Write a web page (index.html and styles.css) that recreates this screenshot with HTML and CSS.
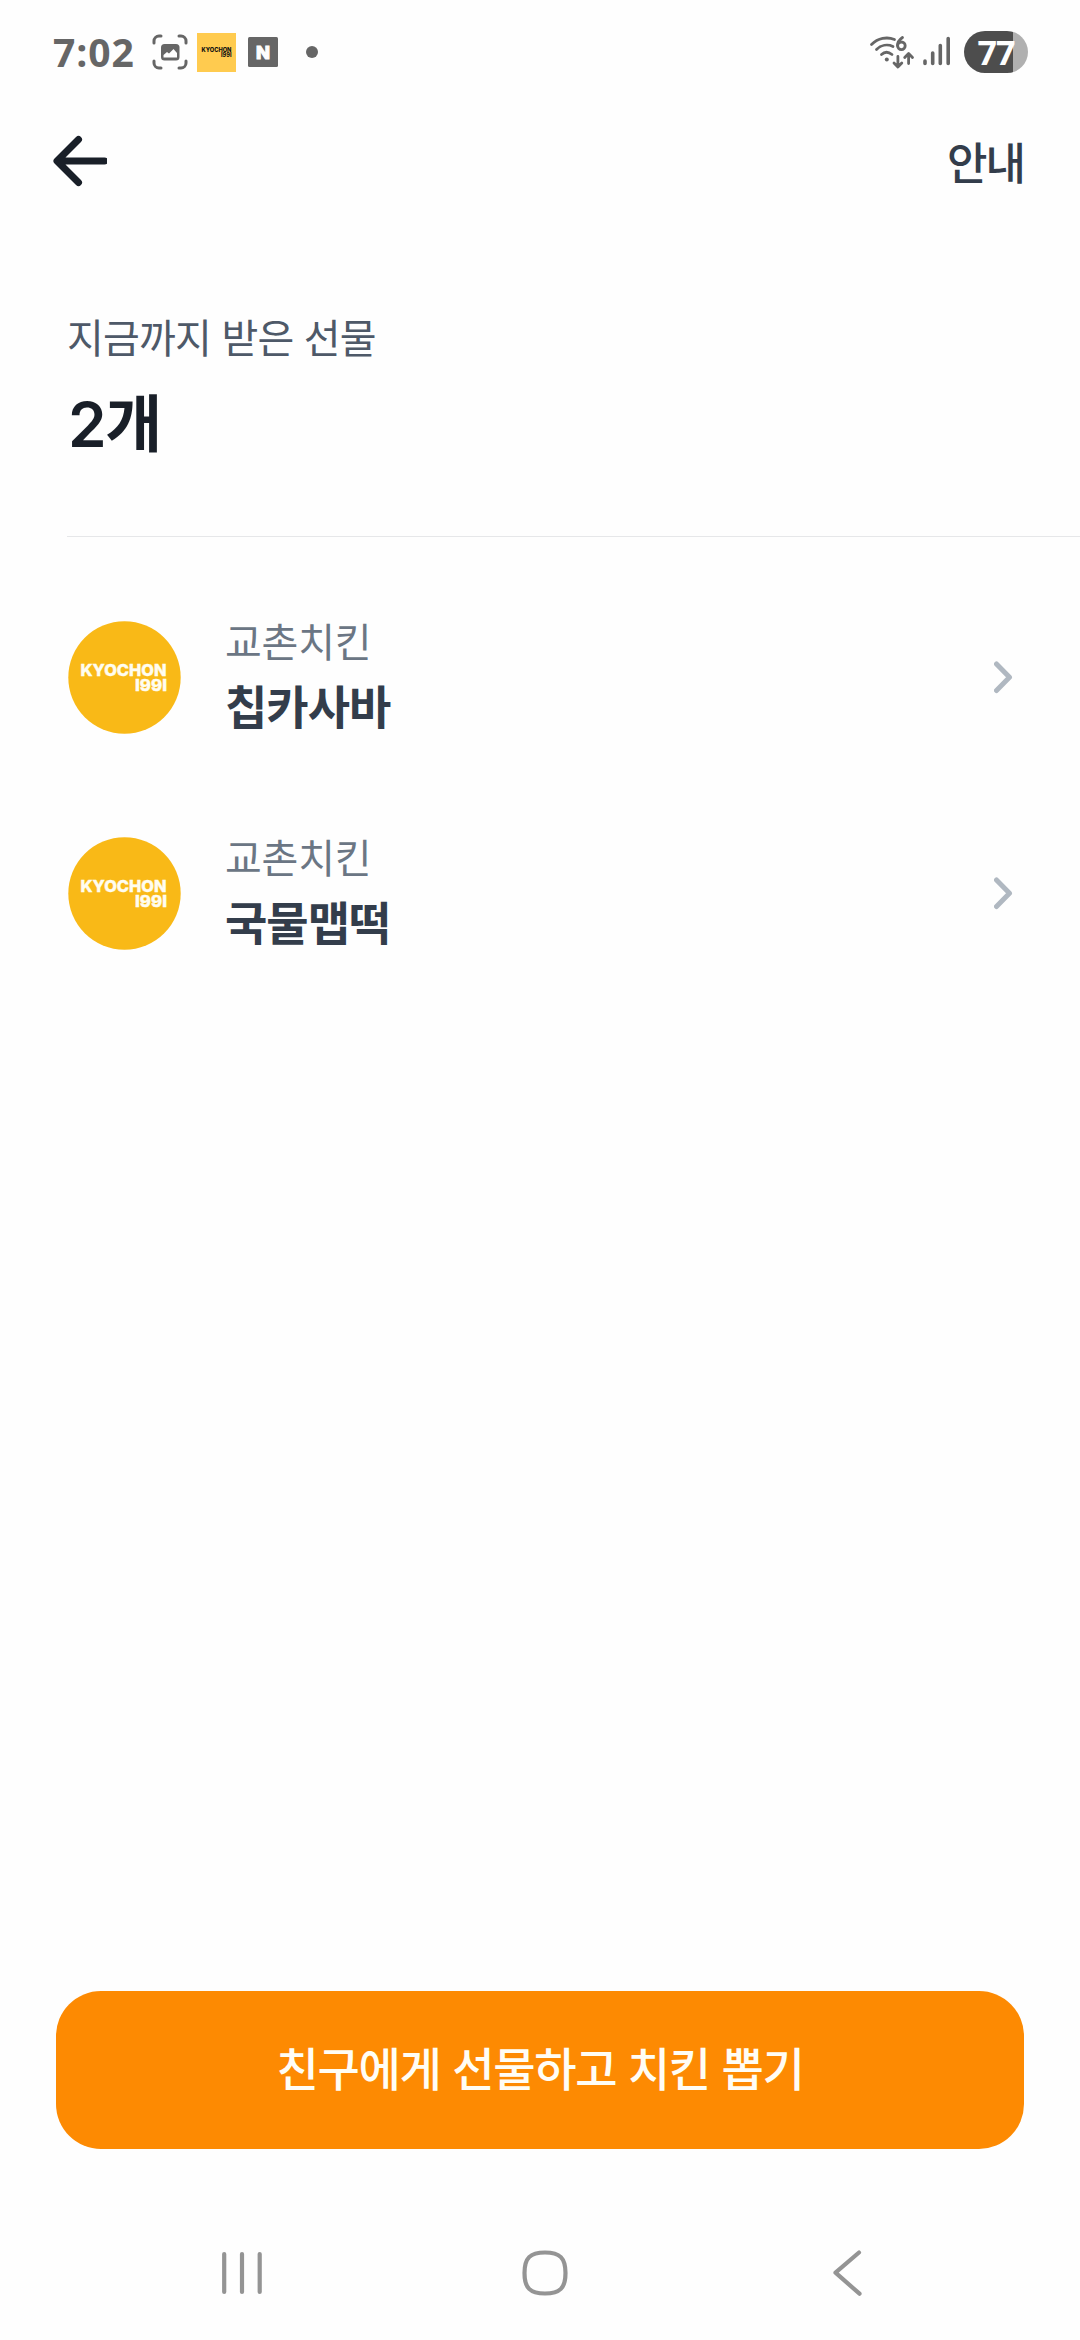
FILE: index.html
```html
<!DOCTYPE html>
<html lang="ko">
<head>
<meta charset="utf-8">
<title>받은 선물</title>
<link rel="stylesheet" href="styles.css">
</head>
<body>
<div class="screen">
  <div class="status">
    <div class="status-left">
      <span class="clock">7:02</span>
      <svg class="ic-capture" width="36" height="36" viewBox="0 0 36 36" fill="none" stroke="#666" stroke-width="3" stroke-linecap="round"><path d="M2 9V7a5 5 0 0 1 5-5h2M27 2h2a5 5 0 0 1 5 5v2M34 27v2a5 5 0 0 1-5 5h-2M9 34H7a5 5 0 0 1-5-5v-2"/><rect x="9" y="10" width="18.500" height="16.500" rx="3.500" fill="#666" stroke="none"/><path d="M11.500 23.500V21l3.500-3 2 1.500 4.500-4.500 3.500 4v4.500z" fill="#fefefe" stroke="none"/></svg>
      <svg class="ic-brand" width="39" height="39" viewBox="0 0 39 39"><rect width="39" height="39" fill="#ffcb4f"/><g class="brand-text" fill="#111"><text x="4.500" y="18.800" font-size="6" textLength="30" lengthAdjust="spacingAndGlyphs">KYOCHON</text><text x="24" y="24.200" font-size="5.500" textLength="10.500" lengthAdjust="spacingAndGlyphs">I99I</text></g></svg>
      <svg class="ic-n" width="30" height="30" viewBox="0 0 30 30"><rect width="30" height="30" rx="1.500" fill="#666"/><text class="brand-text" x="8" y="21.500" font-size="18" fill="#fefefe" stroke="#fefefe" stroke-width="1" textLength="14" lengthAdjust="spacingAndGlyphs">N</text></svg>
      <span class="dot"></span>
    </div>
    <div class="status-right">
      <svg width="46" height="34" viewBox="0 0 46 34" fill="none" stroke="#666" stroke-width="2.800" stroke-linecap="round" stroke-linejoin="round"><path d="M2.500 9.500C9 3 18 1.500 25.500 4.500M7.500 14.500c4.500-4.500 11-5.500 16.500-3M12.500 19.500c3-2.800 7-2.800 10.500 0"/><circle cx="17.800" cy="24.500" r="2" fill="#666" stroke="none"/><path d="M33.500 2.500C30 5 28.500 8 28.500 10.500"/><circle cx="32.400" cy="10.800" r="3.800"/><path d="M28.900 21.500v10M25 28l3.900 4 3.900-4M39.600 28.500v-9.500M35.700 22.500l3.900-4 3.900 4"/></svg>
      <svg class="ic-signal" width="28" height="30" viewBox="0 0 28 30" stroke="#666" stroke-width="3.600" stroke-linecap="round"><path d="M2 25v2.500M9.700 17v10.500M17.300 9.500v18M25.200 2.500v25"/></svg>
      <div class="battery"><span>77</span></div>
    </div>
  </div>
  <header class="topbar">
    <svg width="58" height="52" viewBox="0 0 58 52" fill="none" stroke="#191f28" stroke-width="7" stroke-linecap="round" stroke-linejoin="round"><path d="M29.500 4.500L8 26H55.500M29.500 47.500L8 26"/></svg>
    <span class="guide">안내</span>
  </header>
  <section class="summary">
    <p class="label">지금까지 받은 선물</p>
    <h1 class="count">2개</h1>
  </section>
  <main class="list">
    <div class="item">
      <svg width="113" height="113" viewBox="0 0 113 113"><circle cx="56.500" cy="56.500" r="56.200" fill="#f9b917"/><g class="brand-text" fill="#fffdf0" stroke="#fffdf0" stroke-width=".4"><text x="12.500" y="55" font-size="16.500" textLength="86" lengthAdjust="spacingAndGlyphs">KYOCHON</text><text x="67" y="70" font-size="15.500" textLength="32" lengthAdjust="spacingAndGlyphs">I99I</text></g></svg>
      <div class="item-text"><span class="shop">교촌치킨</span><strong class="menu">칩카사바</strong></div>
      <svg width="20" height="34" viewBox="0 0 20 34" fill="none" stroke="#b0b8c1" stroke-width="5" stroke-linecap="round" stroke-linejoin="round"><path d="M2.500 4l13 13.300L2.500 30.500"/></svg>
    </div>
    <div class="item">
      <svg width="113" height="113" viewBox="0 0 113 113"><circle cx="56.500" cy="56.500" r="56.200" fill="#f9b917"/><g class="brand-text" fill="#fffdf0" stroke="#fffdf0" stroke-width=".4"><text x="12.500" y="55" font-size="16.500" textLength="86" lengthAdjust="spacingAndGlyphs">KYOCHON</text><text x="67" y="70" font-size="15.500" textLength="32" lengthAdjust="spacingAndGlyphs">I99I</text></g></svg>
      <div class="item-text"><span class="shop">교촌치킨</span><strong class="menu">국물맵떡</strong></div>
      <svg width="20" height="34" viewBox="0 0 20 34" fill="none" stroke="#b0b8c1" stroke-width="5" stroke-linecap="round" stroke-linejoin="round"><path d="M2.500 4l13 13.300L2.500 30.500"/></svg>
    </div>
  </main>
  <button class="cta" type="button">친구에게 선물하고 치킨 뽑기</button>
  <nav class="navbar">
    <svg width="40" height="46" viewBox="0 0 40 46" stroke="#949494" stroke-width="4.200" stroke-linecap="round"><path d="M2.200 4v38M20 4v38M37.700 4v38"/></svg>
    <svg class="ic-home" width="46" height="46" viewBox="0 0 46 46" fill="none" stroke="#949494" stroke-width="4.200"><path d="M23 2.500C38 2.500 43.500 8 43.500 23S38 43.500 23 43.500 2.500 38 2.500 23 8 2.500 23 2.500z" /></svg>
    <svg width="30" height="46" viewBox="0 0 30 46" fill="none" stroke="#949494" stroke-width="4.200" stroke-linecap="round" stroke-linejoin="round"><path d="M26 2.500L2.500 22.700 26.500 43.700"/></svg>
  </nav>
</div>
</body>
</html>
```
FILE: styles.css
```css
* { box-sizing: border-box; margin: 0; padding: 0; }
body { background: #fefefe; font-family: "Noto Sans CJK KR", "Noto Sans", sans-serif; }
svg { display: block; flex: none; }
.screen { width: 1080px; height: 2340px; display: flex; flex-direction: column; overflow: hidden; }
.status { height: 104px; padding: 0 53px; display: flex; justify-content: space-between; align-items: center; color: #666; }
.status-left, .status-right { display: flex; align-items: center; }
.clock { width: 99px; font: 700 39px/102px "Open Sans", sans-serif; letter-spacing: .9px; white-space: nowrap; }
.ic-brand { margin-left: 9px; }
.ic-n { margin-left: 12px; }
.dot { width: 12px; height: 12px; margin-left: 28px; border-radius: 50%; background: #666; margin-bottom: 1px; }
.brand-text { font-family: Inter, "Liberation Sans", sans-serif; font-weight: 800; }
.status-right { margin-right: -1px; }
.ic-signal { margin: 0 13px 3px 8px; }
.battery { width: 64px; height: 42px; border-radius: 21px; background: linear-gradient(90deg, #4d4d4d 49px, #b0b0b0 49px); color: #fefefe; font: 700 34px/42px "Open Sans", sans-serif; letter-spacing: -1px; text-align: center; }
.topbar { height: 114px; padding: 0 56px 0 49px; display: flex; justify-content: space-between; align-items: center; }
.guide { color: #333d4b; font-size: 44px; font-weight: 500; line-height: 60px; letter-spacing: -2px; }
.summary { height: 319px; margin-left: 67px; padding-top: 88px; border-bottom: 1px solid #e6e7e9; }
.label { color: #4e5968; font-size: 40px; line-height: 60px; letter-spacing: -.8px; }
.count { color: #191f28; font-family: Inter, "Noto Sans CJK KR", sans-serif; font-size: 62px; font-weight: 700; line-height: 84px; margin-top: 17px; padding-left: 1px; letter-spacing: -1.5px; }
.count::first-letter { font-weight: 600; }
.list { padding: 32px 66px 0 68px; }
.item { height: 216px; display: flex; align-items: center; }
.item-text { flex: 1; display: flex; flex-direction: column; padding: 0 0 6px 44px; }
.shop { color: #6b7684; font-size: 40px; line-height: 60px; letter-spacing: -.2px; }
.menu { color: #333d4b; font-size: 46px; font-weight: 700; line-height: 68px; letter-spacing: -1px; }
.cta { height: 158px; margin: auto 56px 0; padding-bottom: 9px; border: 0; border-radius: 45px; background: #fd8a02; color: #fffdf5; font-family: inherit; font-size: 46px; font-weight: 500; letter-spacing: -1.3px; }
.navbar { height: 191px; padding: 57px 217px 0 222px; display: flex; justify-content: space-between; align-items: center; }
.ic-home { margin: 0 3px 0 -3px; }
```
